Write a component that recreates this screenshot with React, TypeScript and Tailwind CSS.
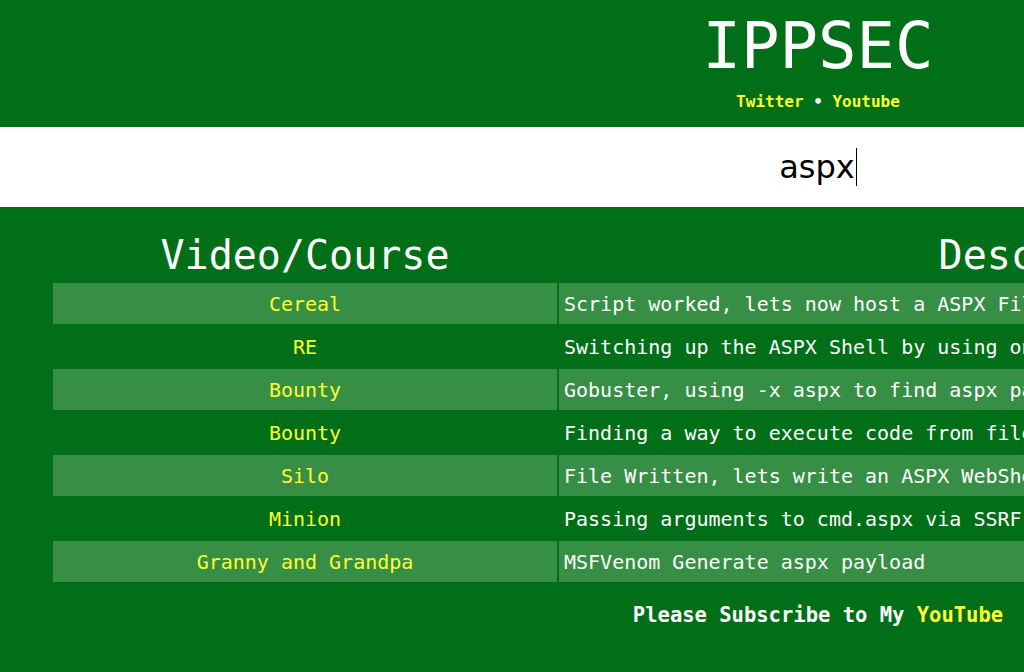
const rows = [
  { video: 'Cereal', desc: 'Script worked, lets now host a ASPX File to get a reverse shell' },
  { video: 'RE', desc: 'Switching up the ASPX Shell by using one that executes a powershell command' },
  { video: 'Bounty', desc: 'Gobuster, using -x aspx to find aspx pages' },
  { video: 'Bounty', desc: 'Finding a way to execute code from file upload via web.config' },
  { video: 'Silo', desc: 'File Written, lets write an ASPX WebShell to the server' },
  { video: 'Minion', desc: 'Passing arguments to cmd.aspx via SSRF' },
  { video: 'Granny and Grandpa', desc: 'MSFVenom Generate aspx payload' },
];

const mono = "font-['DejaVu_Sans_Mono',monospace]";

export default function App() {
  return (
    <div className="w-full min-h-screen overflow-hidden bg-[#006f17]">
      <div className={`w-[1636px] text-white ${mono}`}>
        {/* Header */}
        <div className="h-[127px] flex flex-col items-center">
          <h1 className="pt-[14px] text-[64px] leading-[64px] font-normal">IPPSEC</h1>
          <div className="mt-[14px] text-[16px] leading-[20px] font-bold">
            <a className="text-[#ffff33]">Twitter</a>
            <span className="text-white"> • </span>
            <a className="text-[#ffff33]">Youtube</a>
          </div>
        </div>

        {/* Search */}
        <div className="h-[80px] bg-white flex items-center justify-center">
          <span className="text-[32px] leading-[36px] text-black font-['DejaVu_Sans',sans-serif]">aspx</span>
          <span className="w-[1px] h-[38px] bg-black ml-[1px]" />
        </div>

        {/* Results */}
        <div className="pt-[20px]">
          <table className="w-[1534px] mx-auto border-separate border-spacing-[2px]">
            <thead>
              <tr>
                <th className="w-[504px] h-[52px] p-0 text-[40px] leading-[52px] font-normal text-center">Video/Course</th>
                <th className="h-[52px] p-0 text-[40px] leading-[52px] font-normal text-center">Description</th>
              </tr>
            </thead>
            <tbody>
              {rows.map((r, i) => (
                <tr key={i} className={i % 2 === 0 ? 'bg-[#368f45]' : ''}>
                  <td className="h-[41px] p-0 text-[20px] leading-[24px] text-center text-[#ffff33]">{r.video}</td>
                  <td className="h-[41px] p-0 px-[5px] text-[20px] leading-[24px] text-left whitespace-nowrap">{r.desc}</td>
                </tr>
              ))}
            </tbody>
          </table>
          <p className="mt-[19px] text-center text-[20.5px] leading-[24px] font-bold">
            Please Subscribe to My <a className="text-[#ffff33]">YouTube</a>
          </p>
        </div>
      </div>
    </div>
  );
}
